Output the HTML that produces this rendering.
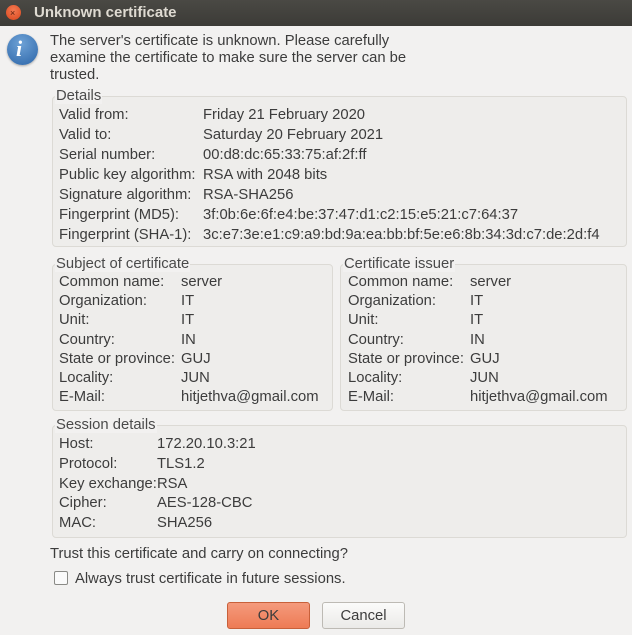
<!DOCTYPE html>
<html><head><style>
*{margin:0;padding:0;box-sizing:border-box}
body{width:632px;height:635px;background:#f2f1f0;font-family:"Liberation Sans",sans-serif;font-size:14.8px;color:#3c3c3c;position:relative;overflow:hidden}
.t{position:absolute;white-space:nowrap;line-height:16px}
.box{position:absolute;border:1px solid #dcdad5;border-radius:4px;background:#eeedeb}
.lbl{position:absolute;background:#f2f1f0;padding:0 1px;line-height:16px;color:#4a4a4a;white-space:nowrap}
.btn{position:absolute;top:602px;width:83px;height:27px;border-radius:3px;color:#3c3c3c}
.btn span{position:absolute;left:0;right:0;top:5px;text-align:center;line-height:16px}
</style></head><body>
<div style="position:absolute;left:0;top:0;width:632px;height:26px;background:linear-gradient(#4a4944,#3c3b37)"></div>
<div style="position:absolute;left:6px;top:5px;width:15px;height:15px;border-radius:50%;background:radial-gradient(circle at 50% 35%,#f37a52,#d9461c)"></div>
<div class="t" style="left:10px;top:5px;font-size:9px;color:#5a2010">×</div>
<div class="t" style="left:34px;top:5px;color:#dfdbd2;font-weight:bold;font-size:15px">Unknown certificate</div>
<div style="position:absolute;left:7px;top:34px;width:31px;height:31px;border-radius:50%;background:radial-gradient(circle at 45% 30%,#6ea2d6,#2c65a8);box-shadow:0 1px 2px rgba(0,0,0,.3)"></div>
<div class="t" style="left:16px;top:38px;color:#fff;font-family:'Liberation Serif',serif;font-style:italic;font-weight:bold;font-size:22px;line-height:22px">i</div>
<div class="t" style="left:50px;top:33px;line-height:17px">The server's certificate is unknown. Please carefully<br>examine the certificate to make sure the server can be<br>trusted.</div>

<div class="box" style="left:52px;top:96px;width:575px;height:151px"></div>
<div class="lbl" style="left:55px;top:88px">Details</div>
<div class="t" style="left:59px;top:105px;line-height:20px">Valid from:<br>Valid to:<br>Serial number:<br>Public key algorithm:<br>Signature algorithm:<br>Fingerprint (MD5):<br>Fingerprint (SHA-1):</div>
<div class="t" style="left:203px;top:105px;line-height:20px">Friday 21 February 2020<br>Saturday 20 February 2021<br>00:d8:dc:65:33:75:af:2f:ff<br>RSA with 2048 bits<br>RSA-SHA256<br>3f:0b:6e:6f:e4:be:37:47:d1:c2:15:e5:21:c7:64:37<br>3c:e7:3e:e1:c9:a9:bd:9a:ea:bb:bf:5e:e6:8b:34:3d:c7:de:2d:f4</div>

<div class="box" style="left:52px;top:264px;width:281px;height:147px"></div>
<div class="lbl" style="left:55px;top:256px">Subject of certificate</div>
<div class="t" style="left:59px;top:273px;line-height:19.2px">Common name:<br>Organization:<br>Unit:<br>Country:<br>State or province:<br>Locality:<br>E-Mail:</div>
<div class="t" style="left:181px;top:273px;line-height:19.2px">server<br>IT<br>IT<br>IN<br>GUJ<br>JUN<br>hitjethva@gmail.com</div>

<div class="box" style="left:340px;top:264px;width:287px;height:147px"></div>
<div class="lbl" style="left:343px;top:256px">Certificate issuer</div>
<div class="t" style="left:348px;top:273px;line-height:19.2px">Common name:<br>Organization:<br>Unit:<br>Country:<br>State or province:<br>Locality:<br>E-Mail:</div>
<div class="t" style="left:470px;top:273px;line-height:19.2px">server<br>IT<br>IT<br>IN<br>GUJ<br>JUN<br>hitjethva@gmail.com</div>

<div class="box" style="left:52px;top:425px;width:575px;height:113px"></div>
<div class="lbl" style="left:55px;top:417px">Session details</div>
<div class="t" style="left:59px;top:435px;line-height:19.8px">Host:<br>Protocol:<br>Key exchange:<br>Cipher:<br>MAC:</div>
<div class="t" style="left:157px;top:435px;line-height:19.8px">172.20.10.3:21<br>TLS1.2<br>RSA<br>AES-128-CBC<br>SHA256</div>

<div class="t" style="left:50px;top:546px">Trust this certificate and carry on connecting?</div>
<div style="position:absolute;left:54px;top:571px;width:14px;height:14px;border:1px solid #8a8a86;border-radius:2px;background:#fafafa"></div>
<div class="t" style="left:75px;top:571px">Always trust certificate in future sessions.</div>

<div class="btn" style="left:227px;border:1px solid #c8603a;background:linear-gradient(#f49a7c,#ee7b55)"><span>OK</span></div>
<div class="btn" style="left:322px;border:1px solid #bdbab4;background:linear-gradient(#fbfbfa,#ebeae8)"><span>Cancel</span></div>
</body></html>
